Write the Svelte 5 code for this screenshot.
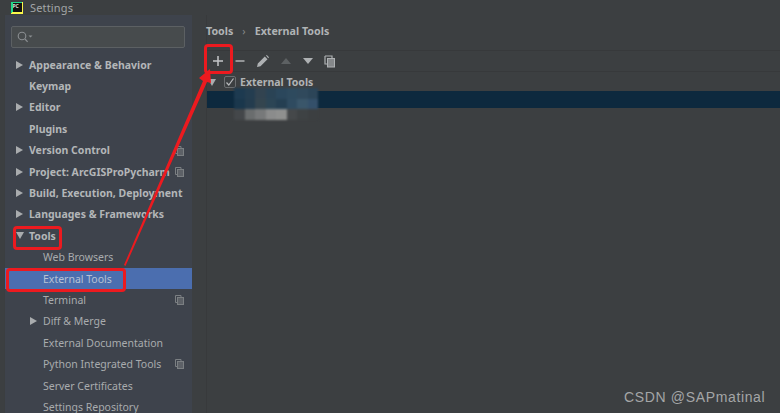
<script>
  const nav = [
    { label: 'Appearance & Behavior', arrow: 'right', bold: true },
    { label: 'Keymap', bold: true },
    { label: 'Editor', arrow: 'right', bold: true },
    { label: 'Plugins', bold: true },
    { label: 'Version Control', arrow: 'right', bold: true, copy: true },
    { label: 'Project: ArcGISProPycharm', arrow: 'right', bold: true, copy: true },
    { label: 'Build, Execution, Deployment', arrow: 'right', bold: true },
    { label: 'Languages & Frameworks', arrow: 'right', bold: true },
    { label: 'Tools', arrow: 'down', bold: true },
    { label: 'Web Browsers', child: true },
    { label: 'External Tools', child: true, selected: true },
    { label: 'Terminal', child: true, copy: true },
    { label: 'Diff & Merge', child: true, arrow: 'right' },
    { label: 'External Documentation', child: true },
    { label: 'Python Integrated Tools', child: true, copy: true },
    { label: 'Server Certificates', child: true },
    { label: 'Settings Repository', child: true }
  ];
  const mosaic = [
    ['#1d3a50','#243d50','#324350','#2a4355','#2b475c','#2e4a5e','#30495c','#2c4558'],
    ['#1a374c','#243c4e','#34454f','#2c4555','#253f52','#2f4b60','#3a566a','#34506a'],
    ['#44474a','#6a6d6e','#77797a','#8b8c8c','#8f908f','#45484a','#3e4244','#3c3f41']
  ];
</script>

<div class="window">
  <header class="titlebar">
    <span class="logo"><span class="logo-in">PC</span></span>
    <span class="title">Settings</span>
  </header>
  <div class="body">
    <aside class="sidebar">
      <div class="search">
        <svg width="16" height="12" viewBox="0 0 16 12"><circle cx="5" cy="5" r="3.800" fill="none" stroke="#8b8f92" stroke-width="1.100"/><path d="M8 8l2.600 2.800" stroke="#8b8f92" stroke-width="1.200"/><path d="M11.500 4.500h4l-2 2z" fill="#8b8f92"/></svg>
      </div>
      <ul class="tree">
        {#each nav as item}
          <li class="row" class:child={item.child} class:selected={item.selected} class:bold={item.bold}>
            {#if item.arrow}
              <span class="arrow {item.arrow}"></span>
            {/if}
            <span class="label">{item.label}</span>
            {#if item.copy}
              <svg class="copy" width="9" height="10" viewBox="0 0 9 10"><path d="M.5.5h5.500v1.500M.5.5v7h1.500" fill="none" stroke="#7b7f82"/><rect x="2.500" y="2.500" width="6" height="7" fill="#7b7f82" fill-opacity=".5" stroke="#7b7f82"/></svg>
            {/if}
          </li>
        {/each}
      </ul>
    </aside>
    <main class="main">
      <div class="crumbs"><b>Tools</b><span class="sep">›</span><b>External Tools</b></div>
      <div class="toolbar">
        <svg class="tool" width="12" height="12" viewBox="0 0 12 12"><path d="M6 1v10M1 6h10" stroke="#c4c6c8" stroke-width="1.500"/></svg>
        <svg class="tool" width="12" height="12" viewBox="0 0 12 12"><path d="M1.500 6h9" stroke="#b0b3b5" stroke-width="1.500"/></svg>
        <svg class="tool" width="14" height="14" viewBox="0 0 14 14"><path d="M1 13l.8-3.500 7-7 2.700 2.700-7 7zM10 1.500l.8-.5 2.200 2.200-.8 1z" fill="#aeb1b3"/></svg>
        <svg class="tool" width="12" height="8" viewBox="0 0 12 8"><path d="M6 1l5 6H1z" fill="#5d6163"/></svg>
        <svg class="tool" width="12" height="8" viewBox="0 0 12 8"><path d="M1 1h10L6 7z" fill="#aeb1b3"/></svg>
        <svg class="tool" width="12" height="13" viewBox="0 0 12 13"><path d="M1 1h7v2M1 1v8h2" fill="none" stroke="#aeb1b3" stroke-width="1.200"/><rect x="3.500" y="3.500" width="7" height="8.500" fill="#85888a" stroke="#aeb1b3"/></svg>
      </div>
      <div class="list">
        <div class="group">
          <span class="arrow down"></span>
          <span class="check"><svg width="10" height="10" viewBox="0 0 10 10"><path d="M1.500 5.500l2.300 2.500L8.500 1.500" fill="none" stroke="#b9bbbd" stroke-width="1.200"/></svg></span>
          <b>External Tools</b>
        </div>
        <div class="picked"></div>
      </div>
    </main>
  </div>

  <div class="mosaic">
    {#each mosaic as line}
      {#each line as c}
        <i style="background:{c}"></i>
      {/each}
    {/each}
  </div>

  <span class="mark m1"></span>
  <span class="mark m2"></span>
  <span class="mark m3"></span>
  <svg class="pointer" width="780" height="413" viewBox="0 0 780 413"><path d="M124 265L203 81 199 78 210 69 211 83 207 82 125.500 266z" fill="#ec1a1f"/></svg>
  <span class="credit">CSDN @SAPmatinal</span>
</div>

<style>
  :global(body) { margin: 0; background: #3c3f41; }
  .window {
    position: relative;
    width: 780px;
    height: 413px;
    overflow: hidden;
    background: #3c3f41;
    font-family: "Noto Sans", "Open Sans", sans-serif;
    color: #b4b7b9;
    font-size: 10.500px;
  }
  .titlebar {
    height: 15px;
    display: flex;
    align-items: center;
    gap: 7px;
    padding-left: 11px;
    background: #3c3f41;
  }
  .logo {
    width: 12px;
    height: 12px;
    background: linear-gradient(135deg, #21d789 50%, #fcf84a 50%);
    display: flex;
    align-items: center;
    justify-content: center;
  }
  .logo-in {
    width: 9px;
    height: 9px;
    background: #111;
    color: #ddd;
    font-size: 5px;
    line-height: 7px;
    font-weight: 700;
    overflow: hidden;
  }
  .title { font-size: 11px; color: #a3a6a8; letter-spacing: .15px; }
  .body { display: flex; height: 398px; }
  .sidebar {
    width: 188px;
    margin-left: 4px;
    background: #3e434c;
    flex: none;
    border-left: 1px solid #3b3e40;
    box-sizing: border-box;
  }
  .search {
    margin: 11px 7px 0 6px;
    height: 20px;
    border: 1px solid #5c6063;
    border-radius: 2px;
    background: #474b4d;
    display: flex;
    align-items: center;
    padding-left: 5px;
  }
  .tree {
    list-style: none;
    margin: 6px 0 0;
    padding: 0;
  }
  .row {
    height: 21.400px;
    display: flex;
    align-items: center;
    position: relative;
    padding-left: 24px;
    white-space: nowrap;
    color: #b3b6b8;
  }
  .row.bold { font-weight: 700; }
  .row.child { padding-left: 38px; font-weight: 400; color: #a9acae; }
  .row.selected { background: #4b6eaf; color: #b7c2d4; }
  .label { position: relative; }
  .row .arrow { position: absolute; left: 11px; }
  .row.child .arrow { left: 25px; }
  .arrow.right {
    width: 0; height: 0;
    border-left: 7px solid #a9acae;
    border-top: 4px solid transparent;
    border-bottom: 4px solid transparent;
  }
  .arrow.down {
    width: 0; height: 0;
    border-top: 7px solid #a9acae;
    border-left: 4px solid transparent;
    border-right: 4px solid transparent;
  }
  .copy { position: absolute; left: 170px; top: 6px; }
  .main { flex: 1; border-left: 1px solid #383a3c; margin-left: 14px; min-width: 0; }
  .crumbs {
    height: 36px;
    padding-bottom: 3px;
    display: flex;
    align-items: center;
    gap: 9px;
    box-sizing: border-box;
    color: #b0b3b5;
    font-size: 10.700px;
    border-bottom: 1px solid #37393b;
  }
  .crumbs b:first-child { margin-left: -1px; }
  .sep { color: #85888a; }
  .toolbar {
    height: 20px;
    display: flex;
    align-items: center;
    padding-left: 5px;
    border-bottom: 1px solid #37393b;
  }
  .tool { flex: none; margin-right: 10px; }
  .list { padding-top: 2px; }
  .group {
    height: 16px;
    display: flex;
    align-items: center;
    color: #b0b3b5;
    padding-left: 1px;
  }
  .group .arrow { margin-right: 8px; }
  .check {
    width: 10px;
    height: 10px;
    border: 1px solid #6b6e70;
    border-radius: 2px;
    margin-right: 4px;
    display: flex;
  }
  .picked {
    height: 17px;
    margin-top: 1px;
    background: #0d293e;
  }
  .mosaic {
    position: absolute;
    left: 234px;
    top: 88px;
    width: 84px;
    height: 32px;
    display: grid;
    grid-template-columns: repeat(8, 10.500px);
    grid-template-rows: repeat(3, 10.700px);
    filter: blur(1px);
  }
  .mosaic i { display: block; }
  .mark {
    position: absolute;
    border: 3px solid #ec1a1f;
    border-radius: 4px;
    box-sizing: border-box;
  }
  .m1 { left: 204px; top: 44px; width: 29px; height: 30px; }
  .m2 { left: 13px; top: 226px; width: 49px; height: 24px; }
  .m3 { left: 6px; top: 268px; width: 120px; height: 24px; }
  .pointer { position: absolute; left: 0; top: 0; }
  .credit {
    position: absolute;
    left: 624px;
    top: 388px;
    font-family: "Liberation Sans", Arial, sans-serif;
    font-size: 14px;
    line-height: 18px;
    color: #a4a6a7;
    letter-spacing: .65px;
  }
</style>
